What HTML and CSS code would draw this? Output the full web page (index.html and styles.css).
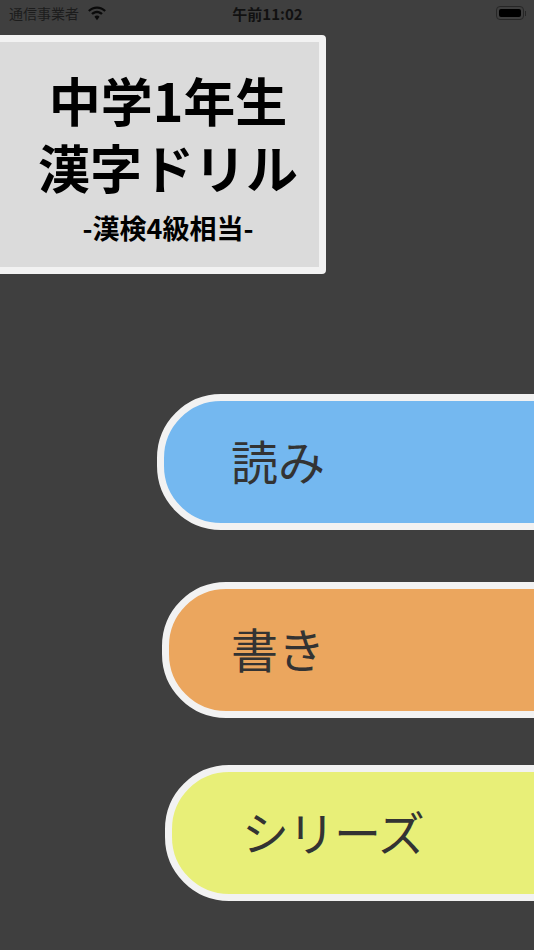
FILE: index.html
```html
<!DOCTYPE html>
<html lang="ja">
<head>
    <meta charset="UTF-8">
    <meta name="viewport" content="width=device-width, initial-scale=1.0">
    <title>中学1年生 漢字ドリル</title>
    <link rel="stylesheet" href="styles.css">
</head>
<body>

<div class="status-bar">
    <div class="carrier">
        <span>通信事業者</span>
        <svg class="wifi" width="20" height="15" viewBox="0 0 19 14">
            <path d="M9.5 2.6c2.7 0 5.1 1 7 2.8l1.5-1.600C15.700 1.600 12.700 .3 9.500 .3S3.300 1.600 1 3.800l1.500 1.600c1.900-1.800 4.300-2.800 7-2.800z"/>
            <path d="M9.500 6.700c1.500 0 2.900.6 4 1.600l1.500-1.600c-1.500-1.400-3.400-2.300-5.500-2.300S5.500 5.300 4 6.700l1.500 1.600c1.100-1 2.500-1.600 4-1.600z"/>
            <path d="M9.500 9c-1 0-1.800.4-2.400 1l2.400 3.300 2.400-3.300c-.6-.6-1.400-1-2.400-1z"/>
        </svg>
    </div>
    <div class="clock">午前11:02</div>
    <div class="battery">
        <div class="battery-body"><div class="battery-level"></div></div>
        <div class="battery-cap"></div>
    </div>
</div>

<div class="title-box">
    <h1>中学1年生<br>漢字ドリル</h1>
    <p>-漢検4級相当-</p>
</div>

<div class="menu">
    <div class="menu-btn yomi">読み</div>
    <div class="menu-btn kaki">書き</div>
    <div class="menu-btn series">シリーズ</div>
</div>

</body>
</html>
```

FILE: styles.css
```css
html, body {
    height: 100%;
}

body {
    margin: 0;
    width: 534px;
    height: 950px;
    overflow: hidden;
    background-color: #3f3f3f;
    font-family: "Noto Sans CJK JP", "Noto Sans", sans-serif;
}

.status-bar {
    display: flex;
    justify-content: space-between;
    align-items: center;
    height: 28px;
    padding: 0 8px 2px 9px;
    box-sizing: border-box;
    color: #111;
    font-size: 14px;
}

.carrier {
    flex: 1;
    display: flex;
    align-items: center;
    gap: 8px;
    color: #1c1c1c;
}

.wifi {
    fill: #0a0a0a;
}

.clock {
    font-size: 15px;
    font-weight: 700;
}

.battery {
    flex: 1;
    display: flex;
    justify-content: flex-end;
    align-items: center;
}

.battery-body {
    box-sizing: border-box;
    width: 28px;
    height: 14px;
    padding: 2px;
    border: 1px solid #262626;
    border-radius: 4px;
}

.battery-level {
    height: 100%;
    background-color: #000;
    border-radius: 2px;
}

.battery-cap {
    width: 1px;
    height: 5px;
    margin-left: 1px;
    background-color: #262626;
}

.title-box {
    box-sizing: border-box;
    width: 334px;
    height: 239px;
    margin: 7px 0 0 -8px;
    padding: 24px 0 0 18px;
    text-align: center;
    color: #000;
    background-color: #dbdbdb;
    border: 7px solid #f2f2f2;
    border-radius: 4px;
}

.title-box h1 {
    margin: 0;
    font-size: 52px;
    font-weight: 700;
    line-height: 67px;
}

.title-box p {
    margin: 12px 0 0;
    font-size: 27px;
    font-weight: 700;
    line-height: 32px;
}

.menu {
    display: flex;
    flex-direction: column;
    margin-top: 120px;
}

.menu-btn {
    box-sizing: border-box;
    display: flex;
    align-items: center;
    width: 460px;
    height: 136px;
    padding-left: 67px;
    padding-bottom: 6px;
    color: #333;
    font-size: 47px;
    border: 7px solid #f2f2f2;
    border-radius: 64px;
}

.yomi {
    margin-left: 157px;
    background-color: #74b8f0;
}

.kaki {
    margin-top: 52px;
    margin-left: 162px;
    padding-left: 62px;
    background-color: #eba65e;
}

.series {
    margin-top: 47px;
    margin-left: 165px;
    padding-left: 70px;
    letter-spacing: -1px;
    background-color: #e8ef78;
}
```
